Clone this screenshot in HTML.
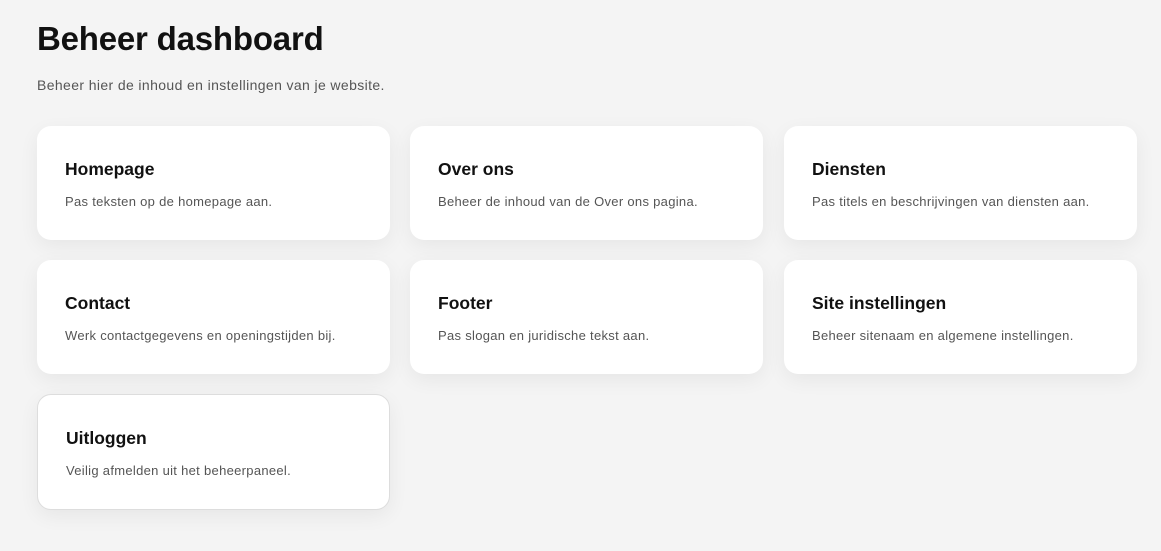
<!DOCTYPE html>
<html><head><meta charset="utf-8"><style>
*{margin:0;padding:0;box-sizing:border-box}
body{width:1161px;height:551px;background:#f4f4f4;font-family:"Liberation Sans",sans-serif;position:relative;overflow:hidden}
h1{position:absolute;left:37px;top:20px;font-size:33px;font-weight:bold;color:#111;letter-spacing:-0.2px}
.sub{position:absolute;left:37px;top:77px;font-size:14px;color:#555;letter-spacing:0.38px}
.card{position:absolute;width:353px;height:114px;background:#fff;border-radius:14px;box-shadow:0 6px 20px rgba(0,0,0,0.06)}
.card h2{position:absolute;left:28px;top:33px;font-size:17.5px;font-weight:600;color:#111}
.card p{position:absolute;left:28px;top:68px;font-size:13px;color:#555;letter-spacing:0.3px}
.b{border:1px solid #ddd}
</style></head><body>
<h1>Beheer dashboard</h1>
<div class="sub">Beheer hier de inhoud en instellingen van je website.</div>
<div class="card" style="left:37px;top:126px"><h2>Homepage</h2><p>Pas teksten op de homepage aan.</p></div>
<div class="card" style="left:410px;top:126px"><h2>Over ons</h2><p>Beheer de inhoud van de Over ons pagina.</p></div>
<div class="card" style="left:784px;top:126px"><h2>Diensten</h2><p>Pas titels en beschrijvingen van diensten aan.</p></div>
<div class="card" style="left:37px;top:260px"><h2>Contact</h2><p>Werk contactgegevens en openingstijden bij.</p></div>
<div class="card" style="left:410px;top:260px"><h2>Footer</h2><p>Pas slogan en juridische tekst aan.</p></div>
<div class="card" style="left:784px;top:260px"><h2>Site instellingen</h2><p>Beheer sitenaam en algemene instellingen.</p></div>
<div class="card b" style="left:37px;top:394px;height:116px"><h2>Uitloggen</h2><p>Veilig afmelden uit het beheerpaneel.</p></div>
</body></html>
